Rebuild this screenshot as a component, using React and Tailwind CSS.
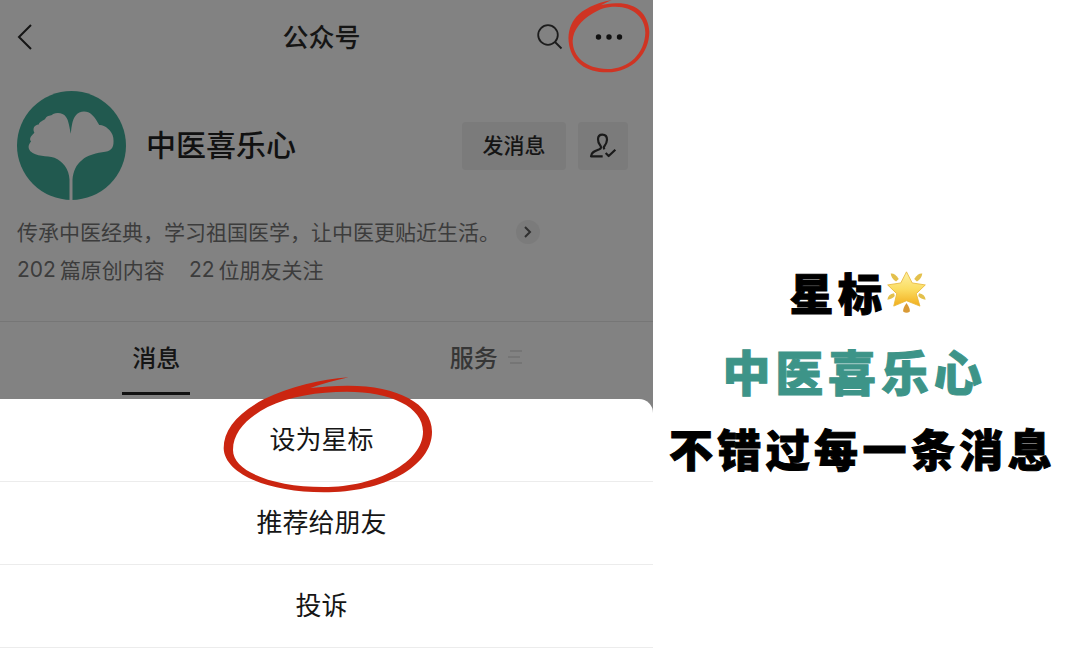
import React from 'react';

const MENU_ITEMS = [
  { id: 'star', label: '设为星标', marked: true },
  { id: 'recommend', label: '推荐给朋友' },
  { id: 'report', label: '投诉' },
];

const STATS = [
  { id: 'posts', count: 202, label: '篇原创内容' },
  { id: 'friends', count: 22, label: '位朋友关注' },
];

function BackIcon() {
  return (
    <svg width="16" height="28" viewBox="0 0 16 28" fill="none" stroke="#151515" strokeWidth="2">
      <path d="M15 2 L3 14 L15 26" />
    </svg>
  );
}

function SearchIcon() {
  return (
    <svg width="26" height="26" viewBox="0 0 26 26" fill="none" stroke="#1c1c1c" strokeWidth="1.8">
      <circle cx="11" cy="11" r="9.8" />
      <path d="M18 18 L24.5 24.5" />
    </svg>
  );
}

function FollowedIcon() {
  return (
    <svg width="28" height="26" viewBox="448 398 84 78" fill="none" stroke="#1a1a1a" strokeWidth="6.5" strokeLinejoin="round">
      <path d="M489 468 H454 C455 454 468 451 479 447 C486 444 485 439 481 434 C476 428 475 422 475 417 C475 408 480 403 488 403 C497 403 502 409 502 418 C502 428 497 434 492 441 L494 447" />
      <path d="M498 458 L507 467 L527 448" />
    </svg>
  );
}

// Ginkgo leaf on a green disc
function Avatar() {
  return (
    <svg className="shrink-0" width="109" height="109" viewBox="51 65 326 326">
      <circle cx="214" cy="228" r="163" fill="#21594f" />
      <path
        fill="#828282"
        d="M208 391 V330 C207 300 188 275 163 265 C140 257 108 262 91 245 C82 234 86 224 93 216 C85 207 96 197 103 190 C97 178 102 166 116 165 C119 154 130 155 136 147 C143 137 152 141 159 134 C172 128 190 131 197 142 C206 153 208 175 212 193 C214 170 217 150 226 139 C238 123 262 123 275 136 C285 145 290 155 297 167 C310 165 336 182 339 205 C342 230 337 244 315 247 C290 250 262 257 245 272 C228 285 219 305 217 330 V391 Z"
      />
    </svg>
  );
}

function SmallCircle() {
  return (
    <svg className="pointer-events-none absolute left-1/2 top-0 max-w-none -translate-x-1/2" width="88" height="74" viewBox="378 0 264 222">
      <path
        fill="#cf3423"
        fillRule="evenodd"
        d="M518 0 C470 8 430 30 412 50 C396 68 386 95 389 125 C395 185 440 217 505 217 C580 217 631 160 631 95 C628 40 590 8 530 10 C512 11 498 13 486 16 C496 10 507 5 518 0 Z M401 122 C403 90 425 62 462 40 C480 28 500 20 530 20 C585 20 619 55 619 98 C617 160 570 207 505 207 C440 205 401 170 401 122 Z"
      />
    </svg>
  );
}

function BigCircle() {
  return (
    <svg className="pointer-events-none absolute left-1/2 -top-7 max-w-none -translate-x-1/2" width="240" height="130" viewBox="-10 3 720 390">
      <path
        fill="#cb2510"
        fillRule="evenodd"
        d="M415 22 C330 28 240 50 160 88 C80 130 40 180 40 235 C42 310 170 367 340 367 C520 367 665 290 665 185 C665 100 560 46 410 47 C370 47 335 50 300 54 C335 42 372 32 415 22 Z M68 240 C68 185 112 143 172 111 C240 78 320 66 410 65 C540 65 638 110 638 185 C638 275 500 351 340 351 C190 351 68 305 68 240 Z"
      />
    </svg>
  );
}

function GlowingStar() {
  return (
    <svg width="41" height="44" viewBox="564 36 122 130">
      <defs>
        <linearGradient id="star" x1="0" y1="0" x2="0" y2="1">
          <stop offset="0" stopColor="#fdf0a4" />
          <stop offset="0.5" stopColor="#fbdd62" />
          <stop offset="1" stopColor="#f2ae1d" />
        </linearGradient>
      </defs>
      <g fill="#e3c04c">
        <path d="M578 46 Q590 44 602 62 L594 70 Q580 62 578 46 Z" />
        <path d="M672 46 Q660 44 648 62 L656 70 Q670 62 672 46 Z" />
        <path d="M568 124 Q570 108 588 105 L590 113 Q582 123 568 124 Z" />
        <path d="M682 124 Q680 108 662 105 L660 113 Q668 123 682 124 Z" />
        <path fill="#d99a35" d="M625 134 Q636 150 635 159 Q625 166 615 159 Q614 150 625 134 Z" />
      </g>
      <path
        fill="url(#star)"
        stroke="#e8b838"
        strokeWidth="2.5"
        strokeLinejoin="round"
        d="M625 41 L642 74 L681 80 L654 106 L665 143 L625 127 L587 143 L596 106 L569 80 L608 74 Z"
      />
    </svg>
  );
}

function Profile() {
  return (
    <section className="px-[17px]">
      <div className="flex items-center pr-2">
        <Avatar />
        <h2 className="ml-5 flex-1 pb-1 text-[30px] font-medium text-[#111]">中医喜乐心</h2>
        <button className="h-12 w-[104px] rounded bg-[#7b7b7b] pb-0.5 text-[21px] font-medium text-[#151515]">发消息</button>
        <button aria-label="已关注" className="ml-3 flex h-12 w-[50px] items-center justify-center rounded bg-[#7b7b7b]">
          <FollowedIcon />
        </button>
      </div>
      <div className="mt-3 flex h-10 items-center gap-4 text-[21px] text-[#3c3c3c]">
        <p>传承中医经典，学习祖国医学，让中医更贴近生活。</p>
        <button aria-label="更多" className="flex h-6 w-6 items-center justify-center rounded-full bg-[#7b7b7b]">
          <svg width="8" height="14" viewBox="0 0 8 14" fill="none" stroke="#303030" strokeWidth="2">
            <path d="M1 2 L6 7 L1 12" />
          </svg>
        </button>
      </div>
      <div className="flex h-9 items-center gap-6 text-[21px] text-[#3c3c3c]">
        {STATS.map(stat => (
          <p key={stat.id} className="flex items-center gap-1">
            <span className="font-['Inter',sans-serif]">{stat.count}</span>
            {stat.label}
          </p>
        ))}
      </div>
    </section>
  );
}

function Tabs() {
  return (
    <nav className="mt-[33px] grid h-[78px] grid-cols-2 border-t border-[#767676] text-[24px] font-medium">
      <div className="flex justify-center pr-3.5">
        <button className="flex h-[73px] w-[68px] items-center justify-center border-b-3 border-[#111] text-[#151515]">消息</button>
      </div>
      <button className="flex h-[73px] items-center justify-center gap-2.5 pb-1 pr-2 text-[#363636]">
        服务
        <svg width="14" height="16" viewBox="0 0 14 16" stroke="#717171" strokeWidth="1.6">
          <path d="M2 2 H14 M0 8 H12 M2 14 H14" />
        </svg>
      </button>
    </nav>
  );
}

function ActionSheet() {
  return (
    <ul className="flex-1 rounded-tr-[14px] bg-white text-[26px] text-[#161616]">
      {MENU_ITEMS.map(item => (
        <li key={item.id} className="relative border-b border-[#ececec]">
          <button className="h-[82px] w-full pb-1.5 pr-2.5">{item.label}</button>
          {item.marked && <BigCircle />}
        </li>
      ))}
    </ul>
  );
}

export default function App() {
  return (
    <main className="grid min-h-screen grid-cols-[653fr_427fr] bg-white font-['Noto_Sans_CJK_SC',sans-serif]">
      <div className="flex flex-col bg-[#828282]">
        <header className="mb-[17px] grid h-[74px] grid-cols-[1fr_auto_1fr] items-center">
          <button aria-label="返回" className="ml-4 justify-self-start">
            <BackIcon />
          </button>
          <h1 className="pb-1 pr-2.5 text-[26px] font-medium text-[#151515]">公众号</h1>
          <div className="flex h-full items-center justify-end">
            <button aria-label="搜索">
              <SearchIcon />
            </button>
            <button aria-label="更多操作" className="relative ml-0.5 flex h-full w-[88px] items-center justify-center">
              <svg width="28" height="6" viewBox="0 0 28 6" fill="#111">
                <circle cx="3.5" cy="3" r="2.7" />
                <circle cx="14" cy="3" r="2.7" />
                <circle cx="24.5" cy="3" r="2.7" />
              </svg>
              <SmallCircle />
            </button>
          </div>
        </header>
        <Profile />
        <Tabs />
        <ActionSheet />
      </div>

      <aside className="flex flex-col items-center pr-2 pt-[253px] font-black text-black [-webkit-text-stroke:1px]">
        <p className="flex h-[78px] items-center pr-2 text-[44px] tracking-widest">
          星标
          <GlowingStar />
        </p>
        <p className="flex h-[78px] items-center pr-4 text-[48px] tracking-widest text-[#3d9488]">中医喜乐心</p>
        <p className="flex h-[78px] items-center whitespace-nowrap text-[44px] tracking-widest">不错过每一条消息</p>
      </aside>
    </main>
  );
}
